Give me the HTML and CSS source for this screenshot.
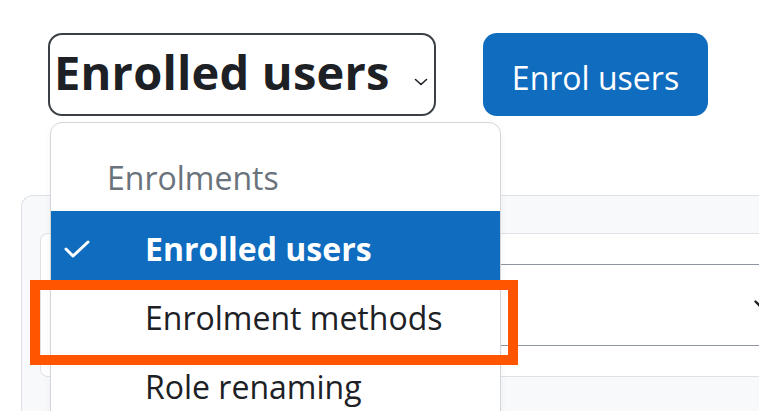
FILE: index.html
```html
<!DOCTYPE html>
<html lang="en">
<head>
<meta charset="utf-8">
<title>Enrolled users</title>
<link rel="stylesheet" href="styles.css">
</head>
<body>
<div class="viewport">
  <div class="topbar">
    <div class="nav-select">
      <span class="nav-select-text">Enrolled users</span>
      <svg class="nav-chevron" width="14" height="8" viewBox="0 0 14 8"><polyline points="1.5,1.5 7,6.5 12.5,1.5" fill="none" stroke="#1d2125" stroke-width="1.6" stroke-linecap="round" stroke-linejoin="round"/></svg>
    </div>
    <div class="btn-primary">Enrol users</div>
  </div>

  <div class="card">
    <div class="filter-box">
      <div class="filter-select">
        <svg class="filter-chevron" width="16" height="10" viewBox="0 0 16 10"><polyline points="1.5,1.5 8,8 14.5,1.5" fill="none" stroke="#1d2125" stroke-width="2.4" stroke-linecap="round" stroke-linejoin="round"/></svg>
      </div>
    </div>
  </div>

  <div class="menu">
    <div class="menu-header">Enrolments</div>
    <div class="menu-item active">
      <span class="check"><svg width="26" height="20" viewBox="0 0 26 20"><polyline points="2,10 9,17 24,3" fill="none" stroke="#ffffff" stroke-width="3" stroke-linecap="round" stroke-linejoin="round"/></svg></span>
      <span>Enrolled users</span>
    </div>
    <div class="menu-item">
      <span class="check"></span>
      <span>Enrolment methods</span>
    </div>
    <div class="menu-item">
      <span class="check"></span>
      <span>Role renaming</span>
    </div>
  </div>

  <div class="highlight"></div>
</div>
</body>
</html>
```

FILE: styles.css
```css
* {
  box-sizing: border-box;
}

html, body {
  margin: 0;
  padding: 0;
  background: #ffffff;
}

body {
  font-family: "Open Sans", "Noto Sans", "Liberation Sans", sans-serif;
  color: #1d2125;
}

.viewport {
  position: relative;
  width: 759px;
  height: 411px;
  overflow: hidden;
  background: #ffffff;
}

.topbar {
  display: flex;
  align-items: flex-start;
  gap: 47px;
  padding: 33px 0 0 48px;
}

.nav-select {
  display: flex;
  align-items: flex-start;
  width: 388px;
  height: 83px;
  border: 2px solid #3b4046;
  border-radius: 14px;
  padding: 14px 0 0 4px;
}

.nav-select-text {
  font-size: 47px;
  font-weight: 700;
  line-height: 47px;
  letter-spacing: 0.2px;
  color: #1d2125;
  white-space: nowrap;
}

.nav-chevron {
  margin: 29px 0 0 auto;
  margin-right: 6px;
}

.btn-primary {
  width: 225px;
  height: 83px;
  background: #0f6cbf;
  border-radius: 14px;
  color: #ffffff;
  font-size: 32px;
  line-height: 44px;
  padding-top: 23px;
  text-align: center;
  white-space: nowrap;
}

.card {
  margin: 79px 0 0 21px;
  width: 769px;
  height: 260px;
  background: #f8f9fa;
  border: 1px solid #dee2e6;
  border-right: none;
  border-radius: 12px 0 0 0;
  padding: 37px 0 0 18px;
}

.filter-box {
  background: #ffffff;
  border: 1px solid #dee2e6;
  border-right: none;
  border-radius: 8px 0 0 8px;
  padding: 30px 0 30px 14px;
}

.filter-select {
  display: flex;
  align-items: center;
  height: 82px;
  border: 1px solid #8f959e;
  border-right: none;
  border-radius: 8px 0 0 8px;
  padding: 0 20px 0 16px;
}

.filter-chevron {
  margin-left: auto;
}

.menu {
  position: absolute;
  left: 50px;
  top: 122px;
  width: 451px;
  height: 330px;
  background: #ffffff;
  border: 1px solid #d3d7db;
  border-radius: 12px;
  box-shadow: 0 3px 8px rgba(0, 0, 0, 0.05);
  overflow: hidden;
}

.menu-header {
  font-size: 32px;
  line-height: 44px;
  color: #6a737b;
  padding: 33px 0 11px 56px;
  white-space: nowrap;
}

.menu-item {
  display: flex;
  align-items: flex-start;
  height: 69px;
  padding: 16px 0 0 13px;
  font-size: 32px;
  line-height: 44px;
  color: #1d2125;
  white-space: nowrap;
}

.menu-item.active {
  background: #0f6cbf;
  color: #ffffff;
  font-weight: 700;
}

.check {
  display: flex;
  align-items: center;
  width: 81px;
  height: 44px;
  flex: none;
}

.highlight {
  position: absolute;
  left: 30px;
  top: 280px;
  width: 488px;
  height: 85px;
  border: 10px solid #ff5500;
}
```
